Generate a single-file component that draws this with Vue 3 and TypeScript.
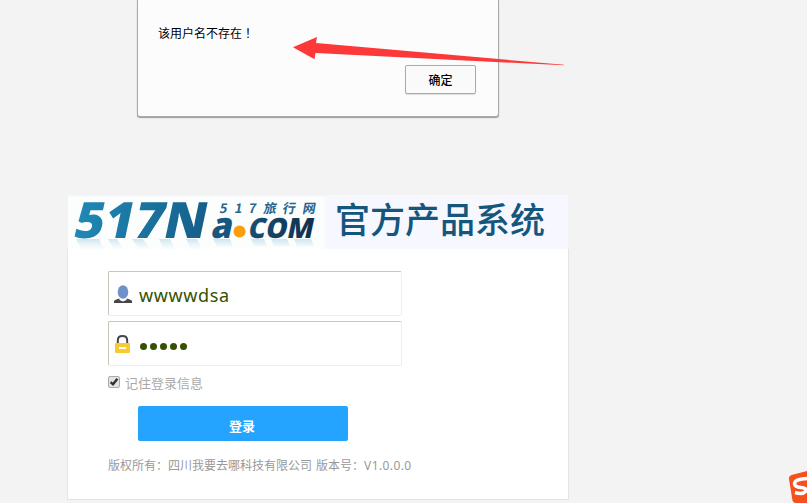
<script setup lang="ts">
import { ref } from 'vue'

const username = ref('wwwwdsa')
const passwordLength = ref(5)
const remember = ref(true)
</script>

<template>
  <main class="page">
    <section class="dialog">
      <p class="message">该用户名不存在<span class="bang">！</span></p>
      <button class="confirm" type="button">确定</button>
    </section>

    <section class="card">
      <header class="banner">
        <svg class="logo" width="257" height="54" viewBox="0 0 257 54">
          <defs>
            <linearGradient id="brand" x1="0" y1="0" x2="1" y2="0">
              <stop offset="0" stop-color="#2089b5" />
              <stop offset="1" stop-color="#155e8b" />
            </linearGradient>
            <linearGradient id="com" x1="0" y1="0" x2="1" y2="0">
              <stop offset="0" stop-color="#164f75" />
              <stop offset="1" stop-color="#102f4c" />
            </linearGradient>
            <linearGradient id="mirror" x1="0" y1="0" x2="0" y2="1">
              <stop offset="0" stop-color="#79b6d2" stop-opacity=".35" />
              <stop offset="1" stop-color="#b9dbe9" stop-opacity=".03" />
            </linearGradient>
          </defs>
          <rect y="2" width="257" height="52" fill="#fcfdfd" />
          <path d="M8 44H31L36 54H13ZM40 44H49L55 54H46ZM64 44H75L82 54H71ZM91 44H102L107 54H96ZM118 44H129L134 54H123ZM145 44H162L165 51H149ZM183 44H196L199 51H186ZM203 44H219L222 51H206ZM226 44H243L246 51H229Z" fill="url(#mirror)" />
          <g transform="translate(0 43) skewX(-12)">
            <text class="brand" x="4" y="0" textLength="132" lengthAdjust="spacingAndGlyphs" fill="url(#brand)">517N</text>
            <text class="brand-a" x="142" y="0" textLength="21" lengthAdjust="spacingAndGlyphs" fill="#17567f">a</text>
            <text class="com" x="179" y="0" textLength="65" lengthAdjust="spacingAndGlyphs" fill="url(#com)">COM</text>
          </g>
          <circle cx="171.5" cy="36.5" r="6" fill="#ff9c0a" />
          <text class="tag" transform="translate(0 18) skewX(-10)" x="151 166 180 195 214 234" y="0">517旅行网</text>
        </svg>
        <h1 class="title">官方产品系统</h1>
      </header>

      <form class="form" @submit.prevent>
        <label class="field">
          <svg class="icon" width="20" height="20" viewBox="0 0 20 20">
            <path d="M1 19V17Q2 15.5 6.5 14.5L10 16.5L13.5 14.5Q18 15.5 19 17V19Z" fill="#47474b" />
            <path d="M6.5 13.5H13.5V16L10 17.5L6.5 16Z" fill="#fff" />
            <ellipse cx="10" cy="8" rx="5.3" ry="6.7" fill="#6f91ca" />
          </svg>
          <input v-model="username" class="entry" type="text" spellcheck="false" />
        </label>
        <div class="field">
          <svg class="icon" width="20" height="20" viewBox="0 0 20 20">
            <path d="M4.8 10V6.4Q4.8 2 9.5 2Q14.2 2 14.2 6.4V10" fill="none" stroke="#47474b" stroke-width="2" />
            <rect x="2" y="9" width="15" height="10" rx="1" fill="#f9c932" />
            <rect x="6" y="13" width="7" height="2" fill="#fff" />
          </svg>
          <span class="dots"><i v-for="n in passwordLength" :key="n" class="dot"></i></span>
        </div>
        <label class="remember">
          <input v-model="remember" class="native" type="checkbox" />
          <svg class="box" width="12" height="12" viewBox="0 0 12 12">
            <rect x=".5" y=".5" width="11" height="11" rx="1.5" fill="#e4e4e4" stroke="#aaa" />
            <path v-if="remember" d="M2.6 6.2L5 8.3L9.4 2.8" fill="none" stroke="#333" stroke-width="2.4" />
          </svg>
          <span>记住登录信息</span>
        </label>
        <button class="submit" type="submit">登录</button>
        <p class="copyright"><span class="owner">版权所有：四川我要去哪科技有限公司</span><span class="edition">版本号：</span><span class="version">V1.0.0.0</span></p>
      </form>
    </section>

    <svg class="arrow" width="272" height="32" viewBox="0 0 272 32">
      <path d="M0 11.3L24 1L23 7L271 28.8V29.3L22.5 17L21.5 23.2Z" fill="#fc3838" />
    </svg>

    <svg class="ime" width="20" height="34" viewBox="0 0 20 34">
      <path d="M2 8Q1.5 5 4.5 4L20 0V34L9 32Q6 32 5.4 29Z" fill="#f5511e" />
      <path d="M20 7.5Q7.5 8 7.5 13Q8 16 14 16.5Q20 17 19 20Q16 24 8 21.5" fill="none" stroke="#fff" stroke-width="3.5" />
    </svg>
  </main>
</template>

<style>
body {
  margin: 0;
  background: #f3f3f3;
}
</style>

<style scoped>
.page {
  position: relative;
  box-sizing: border-box;
  width: 807px;
  height: 503px;
  overflow: hidden;
  background: #f3f3f3;
  font: 12px/16px "Liberation Sans", "Noto Sans CJK SC", sans-serif;
}

.dialog {
  box-sizing: border-box;
  display: flex;
  flex-direction: column;
  width: 362px;
  height: 117px;
  margin-left: 137px;
  padding: 25px 22px 0 20px;
  border: 1px solid #a9a9a9;
  border-top: 0;
  border-radius: 0 0 3px 3px;
  background: #fcfcfc;
  box-shadow: 0 1px 1px #999;
}

.message {
  height: 16px;
  margin: 0;
  color: #000;
}

.bang {
  font-family: "Noto Sans CJK TC", sans-serif;
}

.confirm {
  box-sizing: border-box;
  align-self: flex-end;
  width: 71px;
  height: 29px;
  margin: 24px 0 0;
  padding: 0 0 1px;
  border: 1px solid #aaa;
  border-radius: 2px;
  background: #fafafa;
  box-shadow: 0 1px 1px #ddd;
  color: #000;
  font: 500 12px "Noto Sans CJK SC", sans-serif;
}

.card {
  width: 502px;
  height: 305px;
  margin: 78px 0 0 67px;
}

.banner {
  display: flex;
  height: 54px;
  margin: 0 1px;
  background: #f7f7ff;
}

.logo {
  flex: none;
  overflow: visible;
}

.brand,
.brand-a,
.com {
  font-family: "Open Sans", sans-serif;
  font-weight: 800;
}

.brand {
  font-size: 50px;
}

.brand-a {
  font-size: 36px;
}

.com {
  font-size: 28px;
}

.tag {
  fill: #28658e;
  font: 700 13px "Noto Sans CJK SC", sans-serif;
}

.title {
  margin: 0 0 0 10px;
  color: #15567c;
  font: 500 35px/46px "Noto Sans CJK SC", sans-serif;
  white-space: nowrap;
}

.form {
  box-sizing: border-box;
  display: flex;
  flex-direction: column;
  align-items: flex-start;
  height: 251px;
  padding: 22px 0 0 40px;
  border: 1px solid #e4e4e4;
  border-top: 0;
  background: #fff;
}

.field {
  box-sizing: border-box;
  display: flex;
  align-items: center;
  width: 294px;
  height: 45px;
  margin-bottom: 5px;
  padding-left: 4px;
  border: 1px solid #c6c6bd;
  border-right-color: #eee;
  border-bottom-color: #eee;
  border-radius: 2px;
}

.icon {
  flex: none;
}

.entry {
  width: 240px;
  height: 30px;
  margin: 3px 0 0 6px;
  padding: 0;
  border: 0;
  outline: 0;
  background: transparent;
  color: #365100;
  font: 18px "Noto Sans", sans-serif;
  letter-spacing: 0.6px;
}

.dots {
  display: flex;
  gap: 3px;
  margin: 6px 0 0 7px;
}

.dot {
  width: 7px;
  height: 7px;
  border-radius: 50%;
  background: #365100;
}

.remember {
  display: flex;
  align-items: center;
  gap: 5px;
  height: 16px;
  margin-top: 5px;
  color: #aaa;
  font-size: 13px;
}

.native {
  display: none;
}

.box {
  margin-bottom: 5px;
}

.submit {
  width: 210px;
  height: 35px;
  margin: 14px 0 0 30px;
  padding: 3px 2px 0 0;
  border: 0;
  border-radius: 2px;
  background: #24a4ff;
  color: #fff;
  font: 700 13px "Noto Sans CJK SC", sans-serif;
}

.copyright {
  display: flex;
  margin: 17px 0 0;
  color: #999;
  white-space: nowrap;
}

.edition {
  margin-left: 4px;
}

.version {
  font-family: "Noto Sans", sans-serif;
  letter-spacing: 0.4px;
}

.arrow {
  position: absolute;
  top: 36px;
  left: 293px;
}

.ime {
  position: absolute;
  top: 471px;
  left: 787px;
}
</style>
